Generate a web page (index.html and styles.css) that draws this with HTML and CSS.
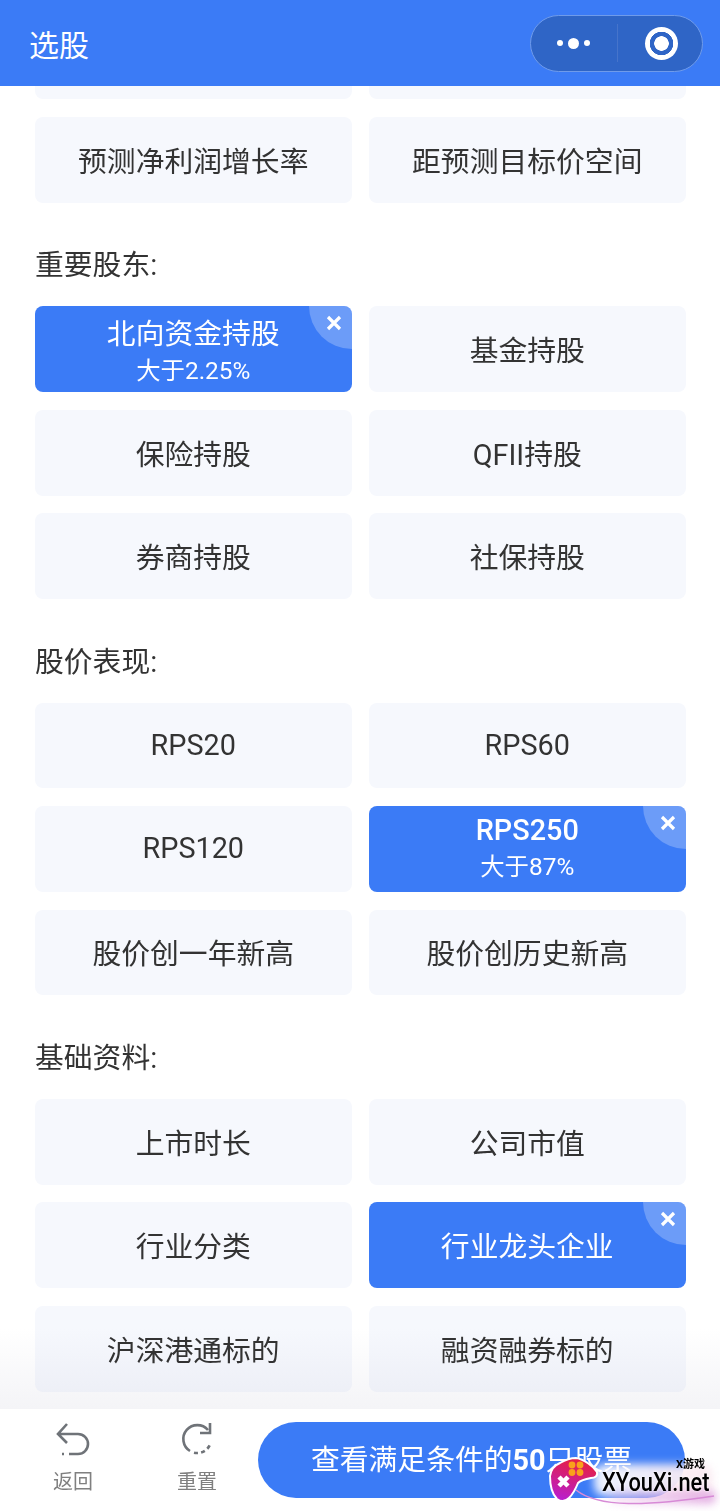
FILE: index.html
```html
<!DOCTYPE html>
<html lang="zh-CN">
<head>
    <meta charset="UTF-8">
    <meta name="viewport" content="width=device-width, initial-scale=1.0">
    <title>选股</title>
    <link rel="stylesheet" href="styles.css">
</head>
<body>
    <header class="topbar">
        <span class="topbar-title">选股</span>
        <div class="capsule">
            <div class="capsule-more">
                <i class="dot"></i><i class="dot dot-big"></i><i class="dot"></i>
            </div>
            <div class="capsule-line"></div>
            <div class="capsule-close"><i class="ring"></i></div>
        </div>
    </header>

    <main class="content">
        <div class="grid">
            <div class="card card-cut"></div>
            <div class="card card-cut"></div>
            <div class="card">预测净利润增长率</div>
            <div class="card">距预测目标价空间</div>
        </div>

        <h3 class="group-title">重要股东:</h3>
        <div class="grid">
            <div class="card card-on card-low">
                <span class="card-name">北向资金持股</span>
                <span class="card-sub">大于2.25%</span>
                <span class="card-x"><svg width="16" height="16" viewBox="0 0 16 16"><path d="M2 2 14 14M14 2 2 14"/></svg></span>
            </div>
            <div class="card">基金持股</div>
            <div class="card">保险持股</div>
            <div class="card">QFII持股</div>
            <div class="card">券商持股</div>
            <div class="card">社保持股</div>
        </div>

        <h3 class="group-title">股价表现:</h3>
        <div class="grid">
            <div class="card">RPS20</div>
            <div class="card">RPS60</div>
            <div class="card">RPS120</div>
            <div class="card card-on">
                <span class="card-name card-name-bold">RPS250</span>
                <span class="card-sub">大于87%</span>
                <span class="card-x"><svg width="16" height="16" viewBox="0 0 16 16"><path d="M2 2 14 14M14 2 2 14"/></svg></span>
            </div>
            <div class="card">股价创一年新高</div>
            <div class="card">股价创历史新高</div>
        </div>

        <h3 class="group-title">基础资料:</h3>
        <div class="grid">
            <div class="card">上市时长</div>
            <div class="card">公司市值</div>
            <div class="card">行业分类</div>
            <div class="card card-on card-single">
                <span class="card-name">行业龙头企业</span>
                <span class="card-x"><svg width="16" height="16" viewBox="0 0 16 16"><path d="M2 2 14 14M14 2 2 14"/></svg></span>
            </div>
            <div class="card">沪深港通标的</div>
            <div class="card">融资融券标的</div>
        </div>
    </main>

    <footer class="bottombar">
        <div class="tool tool-back">
            <svg width="40" height="40" viewBox="0 0 40 40">
                <path d="M14 4 5 14 14 23M5 14H25A10 10 0 0 1 25 34H16"/>
                <path d="M9 34H11"/>
            </svg>
            <span>返回</span>
        </div>
        <div class="tool tool-reset">
            <svg width="40" height="40" viewBox="0 0 40 40">
                <path d="M31 11A14 14 0 1 0 13 32"/>
                <path d="M17 33.7A14 14 0 0 0 33.6 24" stroke-dasharray="4 3.2"/>
                <path d="M33 4V14H23"/>
            </svg>
            <span>重置</span>
        </div>
        <button class="submit">查看满足条件的<b>50</b>只股票</button>

        <div class="watermark">
            <div class="wm-smear"></div>
            <div class="wm-smear-low"></div>
            <svg class="wm-swoosh" width="172" height="55" viewBox="0 0 172 55">
                <path d="M28 34C50 52 100 50 166 40"/>
            </svg>
            <svg class="wm-logo" width="52" height="50" viewBox="-1 -1 52 50">
                <defs>
                    <linearGradient id="padFill" x1="0.6" y1="0" x2="0.3" y2="1">
                        <stop offset="0" stop-color="#e8203c"/>
                        <stop offset="1" stop-color="#b81ed0"/>
                    </linearGradient>
                </defs>
                <path class="wm-pad" d="M26 0C34 1 44 9 47 14C48 18 45 20 41 20C35 21 31 22 28 25C26 30 23 36 19 40C15 44 11 44 7 41C2 36 0 26 0 18C1 11 5 7 10 5C15 2 20 0 26 0Z"/>
                <circle class="wm-btn" cx="22" cy="7" r="3.4"/>
                <circle class="wm-btn" cx="30" cy="7" r="3.4"/>
                <circle class="wm-btn" cx="22" cy="14.5" r="3.4"/>
                <circle class="wm-btn" cx="30" cy="14.5" r="3.4"/>
                <path class="wm-cross" d="M9 19 18 28M18 19 9 28"/>
            </svg>
            <span class="wm-small">X游戏</span>
            <span class="wm-name">XYouXi.net</span>
        </div>
    </footer>
</body>
</html>
```

FILE: styles.css
```css
* {
    box-sizing: border-box;
}

html,
body {
    margin: 0;
    padding: 0;
}

body {
    width: 720px;
    height: 1511px;
    display: flex;
    flex-direction: column;
    overflow: hidden;
    background-color: #FFFFFF;
    color: #333333;
    font-family: Roboto, "Noto Sans CJK SC", sans-serif;
}

/* top bar */
.topbar {
    position: relative;
    z-index: 2;
    flex: none;
    height: 86px;
    padding: 0 17px 0 29px;
    display: flex;
    align-items: center;
    justify-content: space-between;
    background-color: #3B7BF6;
    color: #FFFFFF;
}

.topbar-title {
    font-size: 30px;
}

.capsule {
    width: 173px;
    height: 57px;
    display: flex;
    align-items: center;
    background-color: #2F65C6;
    border: 1px solid #6F9BEA;
    border-radius: 29px;
}

.capsule-more {
    width: 86px;
    display: flex;
    align-items: center;
    justify-content: flex-end;
    gap: 5px;
    padding-right: 27px;
}

.dot {
    width: 6px;
    height: 6px;
    border-radius: 50%;
    background-color: #FFFFFF;
}

.dot-big {
    width: 11px;
    height: 11px;
}

.capsule-line {
    width: 1px;
    height: 38px;
    background-color: #4674CB;
}

.capsule-close {
    flex: 1;
    display: flex;
    justify-content: center;
    padding-left: 2px;
}

.ring {
    width: 33px;
    height: 33px;
    border-radius: 50%;
    background: radial-gradient(circle, #FFFFFF 0 7px, #2F65C6 7.5px 11.5px, #FFFFFF 12px);
}

/* list */
.content {
    flex: 1;
    min-height: 0;
    padding: 0 35px;
}

.grid {
    display: grid;
    grid-template-columns: 316.5px 316.5px;
    column-gap: 17.5px;
    row-gap: 17.75px;
}

.card {
    position: relative;
    height: 85.75px;
    padding-bottom: 1px;
    display: flex;
    flex-direction: column;
    align-items: center;
    justify-content: center;
    overflow: hidden;
    background-color: #F6F8FD;
    border-radius: 8px;
    font-size: 28.8px;
}

.card-cut {
    height: 13.25px;
    padding-bottom: 0;
    border-radius: 0 0 8px 8px;
}

.card-on {
    background-color: #3B7BF6;
    color: #FFFFFF;
}

.card-low {
    padding: 6px 0 0;
}

.card-single {
    padding: 4px 0 0;
}

.card-name {
    line-height: 38px;
}

.card-name-bold {
    font-weight: 500;
}

.card-sub {
    font-size: 24.4px;
    line-height: 36px;
}

.card-x {
    position: absolute;
    top: 0;
    right: 0;
    width: 43px;
    height: 43px;
    padding: 9px 0 0 17px;
    background-color: rgba(255, 255, 255, 0.25);
    border-bottom-left-radius: 100%;
}

.card-x svg {
    display: block;
}

.card-x path {
    fill: none;
    stroke: #FFFFFF;
    stroke-width: 3.2;
}

.group-title {
    height: 28px;
    margin: 48.5px 0 27px;
    font-size: 28.8px;
    font-weight: 400;
    line-height: 28px;
}

/* bottom bar */
.bottombar {
    position: relative;
    flex: none;
    height: 102px;
    padding: 13px 35px 0 0;
    display: flex;
    align-items: flex-start;
    background-color: #FFFFFF;
}

/* fade over the last row, text stays dark */
.bottombar::before {
    content: "";
    position: absolute;
    left: 0;
    right: 0;
    top: -80px;
    height: 80px;
    background: linear-gradient(#FFFFFF, #F4F4F7);
    mix-blend-mode: multiply;
}

.tool {
    width: 40px;
    display: flex;
    flex-direction: column;
    align-items: center;
    color: #808080;
    font-size: 20px;
    line-height: 24px;
}

.tool svg {
    display: block;
    margin-top: -2px;
    margin-bottom: 10px;
}

.tool path {
    fill: none;
    stroke: #6F7378;
    stroke-width: 2.6;
}

.tool-back {
    margin-left: 53px;
}

.tool-reset {
    margin-left: 84px;
}

.tool-reset svg {
    margin-top: -3px;
    margin-bottom: 11px;
}

.submit {
    width: 427px;
    height: 76px;
    margin-left: 41px;
    padding: 0 0 6px;
    background-color: #3B7BF6;
    border: none;
    border-radius: 38px;
    color: #FFFFFF;
    font-family: inherit;
    font-size: 28.8px;
    white-space: nowrap;
}

/* site stamp over the corner */
.watermark {
    position: absolute;
    left: 548px;
    top: 47px;
    width: 172px;
    height: 55px;
    color: #000000;
}

.wm-smear {
    position: absolute;
    left: 46px;
    top: 8px;
    width: 118px;
    height: 32px;
    background: linear-gradient(90deg, rgba(255, 255, 255, 0.9), rgba(250, 232, 240, 0.95));
    border-radius: 10px;
    filter: blur(4px);
}

.wm-smear-low {
    position: absolute;
    left: 60px;
    top: 34px;
    width: 108px;
    height: 14px;
    background: linear-gradient(90deg, rgba(235, 190, 235, 0.3), rgba(215, 140, 215, 0.7));
    border-radius: 8px;
    filter: blur(4px);
}

.wm-swoosh {
    position: absolute;
    left: 0;
    top: 0;
}

.wm-swoosh path {
    fill: none;
    stroke: #D78AD6;
    stroke-width: 1.6;
}

.wm-logo {
    position: absolute;
    left: 1px;
    top: 1px;
}

.wm-pad {
    fill: url(#padFill);
    stroke: #FFFFFF;
    stroke-width: 2;
}

.wm-btn {
    fill: #F9A11B;
}

.wm-cross {
    fill: none;
    stroke: #FFFFFF;
    stroke-width: 4.5;
}

.wm-small {
    position: absolute;
    left: 128px;
    top: 2px;
    font-size: 11px;
    font-weight: 700;
    line-height: 14px;
}

.wm-name {
    position: absolute;
    left: 54px;
    top: 16px;
    font-family: Roboto, sans-serif;
    font-size: 26px;
    font-weight: 500;
    line-height: 20px;
    white-space: nowrap;
    text-shadow: 0 0 3px #FFFFFF;
    transform: scaleX(0.84);
    transform-origin: left center;
}
```
